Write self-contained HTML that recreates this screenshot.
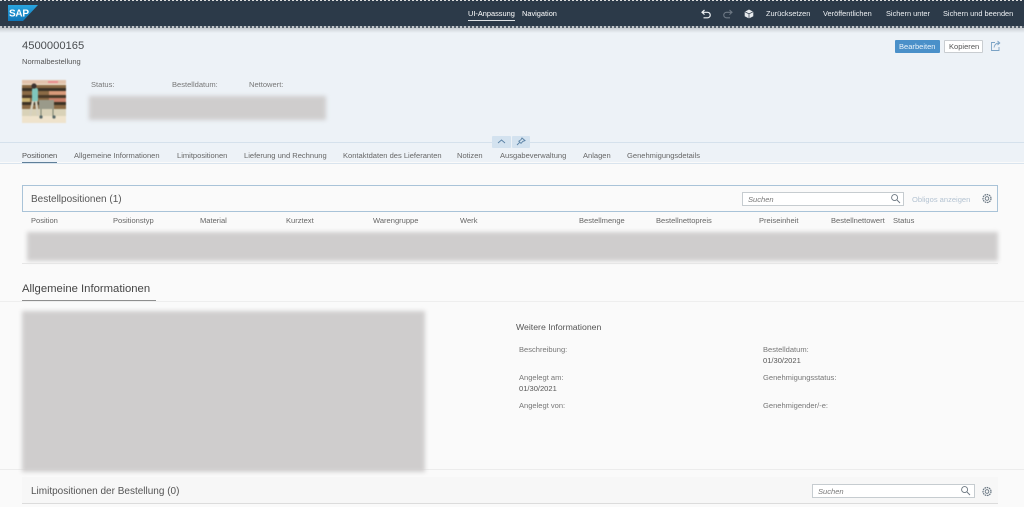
<!DOCTYPE html>
<html lang="de"><head><meta charset="utf-8"><title>Bestellung 4500000165</title>
<style>
html,body{margin:0;padding:0}
body{width:1024px;height:507px;overflow:hidden;background:#fafafa;position:relative;font-family:"Liberation Sans",sans-serif}
.a{position:absolute}
.t{position:absolute;white-space:nowrap;font-size:7.55px;line-height:10px;color:#666;filter:blur(.35px)}
.w{color:#eef1f4;font-size:7.4px}
.g{position:absolute;background:#cfcdcd;filter:blur(2px)}
.inp{position:absolute;background:#fff;border:1px solid #c6ccd0;box-sizing:border-box}
</style></head><body>

<!-- shell bar -->
<div class="a" style="left:0;top:0;width:1024px;height:28px;background:#2c3a49"></div>
<div class="a" style="left:0;top:0;width:1024px;height:1px;background:repeating-linear-gradient(90deg,#ddd 0 2px,#2c3a49 2px 4px)"></div>
<div class="a" style="left:0;top:26px;width:1024px;height:2px;background:repeating-linear-gradient(90deg,#c4c8cc 0 2px,#56616d 2px 4px)"></div>
<div class="a" style="left:0;top:28px;width:1024px;height:5px;background:linear-gradient(#c9ced3,#edf2f7)"></div>
<svg class="a" style="left:8px;top:5px;filter:blur(.3px)" width="31" height="17" viewBox="0 0 31 17"><defs><linearGradient id="s" x1="0" y1="0" x2="0" y2="1"><stop offset="0" stop-color="#2aa6e0"/><stop offset="1" stop-color="#0f76b8"/></linearGradient></defs><path d="M0 0H30L15 16H0Z" fill="url(#s)"/><text x="1" y="11.5" font-family="Liberation Sans" font-weight="700" font-size="10" fill="#fff" textLength="20">SAP</text></svg>

<div class="t w" style="left:468px;top:9px;color:#fff">UI-Anpassung</div>
<div class="a" style="left:468px;top:20px;width:47px;height:1px;background:#dfe3e6"></div>
<div class="t w" style="left:522px;top:9px;color:#fff">Navigation</div>
<svg class="a" style="left:700px;top:9px" width="12" height="10" viewBox="0 0 12 10" fill="none" stroke="#eef1f4" stroke-width="1.2"><path d="M4.5 1 2 3.3 4.5 5.6M2 3.3H7.5A2.6 2.6 0 0 1 7.5 8.8H3.5"/></svg>
<svg class="a" style="left:722px;top:9px" width="12" height="10" viewBox="0 0 12 10" fill="none" stroke="#6d7884" stroke-width="1.1"><path d="M7.5 1 10 3.3 7.5 5.6M10 3.3H4.5A2.6 2.6 0 0 0 4.5 8.8H8"/></svg>
<svg class="a" style="left:744px;top:9px" width="10" height="10" viewBox="0 0 10 10"><path d="M5 .5 9.3 2.7V7.3L5 9.5 .7 7.3V2.7Z" fill="#e8ebee"/><path d="M5 4.8V9.5M.7 2.7 5 4.8 9.3 2.7" stroke="#2c3a49" stroke-width=".7" fill="none"/></svg>
<div class="t w" style="left:766px;top:9px">Zurücksetzen</div>
<div class="t w" style="left:823px;top:9px">Veröffentlichen</div>
<div class="t w" style="left:886px;top:9px">Sichern unter</div>
<div class="t w" style="left:943px;top:9px">Sichern und beenden</div>

<!-- object header -->
<div class="a" style="left:0;top:33px;width:1024px;height:129px;background:#edf2f7"></div>
<div class="t" style="left:22px;top:39.5px;font-size:11.2px;line-height:13px;color:#4a4d50">4500000165</div>
<div class="t" style="left:22px;top:56.5px;color:#555">Normalbestellung</div>

<svg class="a" style="left:22px;top:80px;filter:blur(.6px)" width="44" height="43" viewBox="0 0 44 43">
<rect width="44" height="43" fill="#f1e4cf"/><rect y="0" width="44" height="4" fill="#e2c3ac"/><rect x="26" y="1" width="10" height="2" fill="#ea8d8d"/>
<rect y="5" width="44" height="24" fill="#8a6a45"/>
<rect y="8" width="44" height="3" fill="#3a3226"/><rect y="15" width="44" height="3" fill="#4a3a28"/><rect y="22" width="44" height="3" fill="#3d3224"/>
<rect x="27" y="11" width="17" height="4" fill="#d99a7a"/><rect x="27" y="18" width="17" height="4" fill="#c9806a"/><rect x="0" y="18" width="8" height="4" fill="#c8b070"/>
<rect y="29" width="44" height="14" fill="#d9d2b8"/><rect y="36" width="44" height="7" fill="#efe3cc"/>
<rect x="10" y="8" width="6" height="14" rx="2" fill="#7fc7bd"/><circle cx="12" cy="6" r="2.6" fill="#3b3330"/><path d="M11 21 8 36M14 21 16 36" stroke="#d7d2c0" stroke-width="2.4"/>
<rect x="17" y="20" width="15" height="9" fill="#9a9a8a"/><path d="M19 29V36M31 29V36" stroke="#77806f"/><circle cx="19" cy="37" r="1.6" fill="#566"/><circle cx="32" cy="37" r="1.6" fill="#566"/>
</svg>

<div class="t" style="left:91px;top:80px;color:#777">Status:</div>
<div class="t" style="left:172px;top:80px;color:#777">Bestelldatum:</div>
<div class="t" style="left:249px;top:80px;color:#777">Nettowert:</div>
<div class="g" style="left:89px;top:96px;width:237px;height:24px"></div>

<div class="a" style="left:895px;top:40px;width:45px;height:13px;background:#4a90c9;border-radius:1px"></div>
<div class="t" style="left:899px;top:41.5px;color:#eaf3fa">Bearbeiten</div>
<div class="a" style="left:944px;top:40px;width:39px;height:13px;background:#fff;border:1px solid #c9cdd1;box-sizing:border-box;border-radius:1px"></div>
<div class="t" style="left:949px;top:41.5px;color:#555">Kopieren</div>
<svg class="a" style="left:990px;top:40px" width="11" height="12" viewBox="0 0 11 12" fill="none" stroke="#7ba3c5" stroke-width=".9"><path d="M5 2.5H1.5V10.5H9V7M4 7.5C4.5 4.5 6 3 9.5 3M7.5 1 9.8 3 7.5 5"/></svg>

<!-- tabs -->
<div class="a" style="left:0;top:142px;width:492px;height:1px;background:#d5e1ec"></div>
<div class="a" style="left:530px;top:142px;width:494px;height:1px;background:#d5e1ec"></div>
<div class="a" style="left:492px;top:136px;width:19px;height:12px;background:#d3e2ef;border-radius:1px"></div>
<div class="a" style="left:512px;top:136px;width:18px;height:12px;background:#d3e2ef;border-radius:1px"></div>
<svg class="a" style="left:497px;top:138px" width="9" height="7" viewBox="0 0 9 7" fill="none" stroke="#5b82a5" stroke-width=".9"><path d="M1 5 4.5 2 8 5"/></svg>
<svg class="a" style="left:516px;top:137px" width="10" height="9" viewBox="0 0 10 9" fill="none" stroke="#5b82a5" stroke-width=".9"><path d="M6 1 9 3.6 6.8 4.4 5 6.4 2.8 4.2 5 2.7ZM3.6 5.4 1 8"/></svg>
<div class="t" style="left:22px;top:150.5px;color:#555">Positionen</div>
<div class="t" style="left:74px;top:150.5px">Allgemeine Informationen</div>
<div class="t" style="left:177px;top:150.5px">Limitpositionen</div>
<div class="t" style="left:244px;top:150.5px">Lieferung und Rechnung</div>
<div class="t" style="left:343px;top:150.5px">Kontaktdaten des Lieferanten</div>
<div class="t" style="left:457px;top:150.5px">Notizen</div>
<div class="t" style="left:500px;top:150.5px">Ausgabeverwaltung</div>
<div class="t" style="left:583px;top:150.5px">Anlagen</div>
<div class="t" style="left:627px;top:150.5px">Genehmigungsdetails</div>
<div class="a" style="left:22px;top:162px;width:35px;height:1px;background:#5f7f99"></div>
<div class="a" style="left:0;top:163px;width:1024px;height:1px;background:#d9e4ee"></div>

<!-- Bestellpositionen -->
<div class="a" style="left:22px;top:185px;width:976px;height:27px;box-sizing:border-box;background:#fafafa;border:1px solid #a9c3d8"></div>
<div class="t" style="left:31px;top:193.5px;font-size:10px;line-height:12px;color:#555">Bestellpositionen (1)</div>
<div class="inp" style="left:742px;top:192px;width:162px;height:14px"></div>
<div class="t" style="left:748px;top:194.5px;font-style:italic;color:#777">Suchen</div>
<svg class="a" style="left:890px;top:193px" width="11" height="11" viewBox="0 0 11 11" fill="none" stroke="#6b7680" stroke-width=".9"><circle cx="4.6" cy="4.6" r="3"/><path d="M7 7 10 10"/></svg>
<div class="t" style="left:912px;top:194.5px;color:#b4c3d2">Obligos anzeigen</div>
<svg class="a" style="left:982px;top:193px" width="10" height="11" viewBox="0 0 10 10" fill="none" stroke="#667480" stroke-width=".9"><circle cx="5" cy="5" r="1.8"/><circle cx="5" cy="5" r="4" stroke-dasharray="1.6 .7" stroke-width="1.2"/></svg>

<div class="t" style="left:31px;top:216px">Position</div>
<div class="t" style="left:113px;top:216px">Positionstyp</div>
<div class="t" style="left:200px;top:216px">Material</div>
<div class="t" style="left:286px;top:216px">Kurztext</div>
<div class="t" style="left:373px;top:216px">Warengruppe</div>
<div class="t" style="left:460px;top:216px">Werk</div>
<div class="t" style="left:579px;top:216px">Bestellmenge</div>
<div class="t" style="left:656px;top:216px">Bestellnettopreis</div>
<div class="t" style="left:759px;top:216px">Preiseinheit</div>
<div class="t" style="left:831px;top:216px">Bestellnettowert</div>
<div class="t" style="left:893px;top:216px">Status</div>
<div class="g" style="left:27px;top:232px;width:971px;height:29px"></div>
<div class="a" style="left:22px;top:263px;width:976px;height:1px;background:#e6e6e6"></div>

<!-- Allgemeine Informationen -->
<div class="t" style="left:22px;top:282px;font-size:11.3px;line-height:14px;color:#444">Allgemeine Informationen</div>
<div class="a" style="left:22px;top:300px;width:134px;height:1px;background:#8e8e8e"></div>
<div class="a" style="left:0;top:301px;width:1024px;height:1px;background:#eee"></div>
<div class="a" style="left:0;top:469px;width:1024px;height:1px;background:#ececec"></div>
<div class="g" style="left:22px;top:311px;width:403px;height:161px"></div>

<div class="t" style="left:516px;top:322px;font-size:8.7px;line-height:11px;color:#555">Weitere Informationen</div>
<div class="t" style="left:519px;top:345px;color:#777">Beschreibung:</div>
<div class="t" style="left:519px;top:373px;color:#777">Angelegt am:</div>
<div class="t" style="left:519px;top:384px;color:#555">01/30/2021</div>
<div class="t" style="left:519px;top:401px;color:#777">Angelegt von:</div>
<div class="t" style="left:763px;top:345px;color:#777">Bestelldatum:</div>
<div class="t" style="left:763px;top:356px;color:#555">01/30/2021</div>
<div class="t" style="left:763px;top:373px;color:#777">Genehmigungsstatus:</div>
<div class="t" style="left:763px;top:401px;color:#777">Genehmigender/-e:</div>

<!-- Limitpositionen -->
<div class="a" style="left:22px;top:477px;width:976px;height:26px;background:#f7f7f7"></div>
<div class="t" style="left:31px;top:485.5px;font-size:10px;line-height:12px;color:#555">Limitpositionen der Bestellung (0)</div>
<div class="inp" style="left:812px;top:484px;width:163px;height:14px"></div>
<div class="t" style="left:818px;top:486.5px;font-style:italic;color:#777">Suchen</div>
<svg class="a" style="left:960px;top:485px" width="11" height="11" viewBox="0 0 11 11" fill="none" stroke="#6b7680" stroke-width=".9"><circle cx="4.6" cy="4.6" r="3"/><path d="M7 7 10 10"/></svg>
<svg class="a" style="left:982px;top:486px" width="10" height="11" viewBox="0 0 10 10" fill="none" stroke="#667480" stroke-width=".9"><circle cx="5" cy="5" r="1.8"/><circle cx="5" cy="5" r="4" stroke-dasharray="1.6 .7" stroke-width="1.2"/></svg>
<div class="a" style="left:22px;top:503px;width:976px;height:1px;background:#dcdcdc"></div>
</body></html>
